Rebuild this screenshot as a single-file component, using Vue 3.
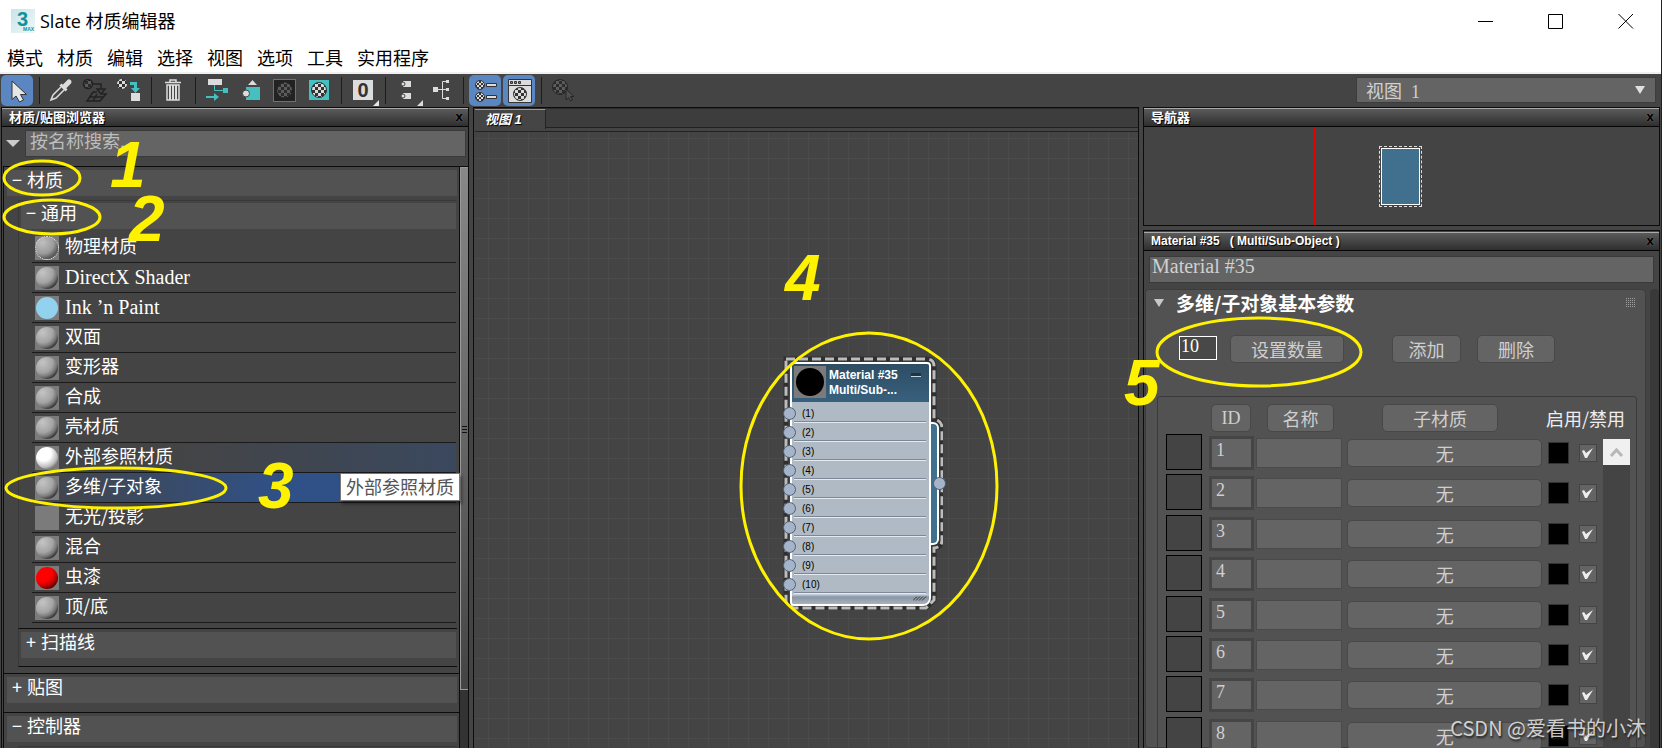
<script setup>
import { ref } from 'vue'

const menus = ['模式', '材质', '编辑', '选择', '视图', '选项', '工具', '实用程序']

const materials = [
  { name: '物理材质', kind: 'rim' },
  { name: 'DirectX Shader', kind: 'grey', latin: true },
  { name: 'Ink ’n Paint', kind: 'flat', latin: true },
  { name: '双面', kind: 'grey' },
  { name: '变形器', kind: 'grey' },
  { name: '合成', kind: 'grey' },
  { name: '壳材质', kind: 'grey' },
  { name: '外部参照材质', kind: 'white', state: 'hover' },
  { name: '多维/子对象', kind: 'grey', state: 'selected', tip: '外部参照材质' },
  { name: '无光/投影', kind: 'none' },
  { name: '混合', kind: 'grey' },
  { name: '虫漆', kind: 'red' },
  { name: '顶/底', kind: 'grey' }
]

const slots = [1, 2, 3, 4, 5, 6, 7, 8, 9, 10]
const rows = ref([1, 2, 3, 4, 5, 6, 7, 8].map((id) => ({ id, name: '', on: true })))
const count = ref('10')
const materialName = ref('Material #35')
</script>

<template>
  <div class="window">
    <svg class="defs" width="0" height="0" aria-hidden="true">
      <defs>
        <pattern id="chk-light" width="4" height="4" patternUnits="userSpaceOnUse">
          <rect width="4" height="4" fill="#e0e0e0" />
          <rect width="2" height="2" fill="#333" /><rect x="2" y="2" width="2" height="2" fill="#333" />
        </pattern>
        <pattern id="chk-big" width="6" height="6" patternUnits="userSpaceOnUse">
          <rect width="6" height="6" fill="#dcdcdc" />
          <rect width="3" height="3" fill="#333" /><rect x="3" y="3" width="3" height="3" fill="#333" />
        </pattern>
        <pattern id="chk-dark" width="6" height="6" patternUnits="userSpaceOnUse">
          <rect width="6" height="6" fill="#5c5c5c" />
          <rect width="3" height="3" fill="#2c2c2c" /><rect x="3" y="3" width="3" height="3" fill="#2c2c2c" />
        </pattern>
      </defs>
    </svg>

    <header class="titlebar">
      <svg class="logo" viewBox="0 0 24 24" aria-hidden="true">
        <defs>
          <linearGradient id="logo-bg" x1="0" y1="0" x2="1" y2="1">
            <stop offset="0" stop-color="#c9e4e8" /><stop offset="1" stop-color="#eef8f8" />
          </linearGradient>
        </defs>
        <rect width="24" height="24" fill="url(#logo-bg)" />
        <text x="6" y="17" class="logo-three">3</text>
        <text x="12" y="22" class="logo-max">MAX</text>
      </svg>
      <h1>Slate 材质编辑器</h1>
      <div class="win-buttons">
        <button type="button" aria-label="最小化"><svg viewBox="0 0 16 16"><path d="M0 8.5H15" /></svg></button>
        <button type="button" aria-label="最大化"><svg viewBox="0 0 16 16"><path d="M.5 1.500H14.500V15.500H.5Z" /></svg></button>
        <button type="button" aria-label="关闭"><svg viewBox="0 0 16 16"><path d="M.5 1L15 15.500M15 1L.5 15.500" /></svg></button>
      </div>
    </header>

    <nav class="menubar">
      <button v-for="m in menus" :key="m" type="button">{{ m }}</button>
    </nav>

    <div class="toolbar">
      <button type="button" class="tool active" aria-label="选择工具">
        <svg viewBox="0 0 32 32"><path fill="#e6e6e6" stroke="#333" d="M11 6V24.500L15 21L18.500 27L22.500 25L19.500 19.500H25.500Z" /></svg>
      </button>
      <i class="sep"></i>
      <button type="button" class="tool" aria-label="从对象拾取材质">
        <svg viewBox="0 0 32 32" fill="none" stroke="#dcdcdc">
          <path stroke-width="5" stroke-linecap="round" d="M20 11L24 7" /><path stroke-width="3" d="M15.500 9.500L21.500 15.500" />
          <path stroke-width="1.500" d="M16 12L8 20L6 25L11 23L19 15" />
        </svg>
      </button>
      <button type="button" class="tool" aria-label="将材质放入场景">
        <svg viewBox="0 0 32 32" fill="none" stroke="#222">
          <circle cx="9" cy="9" r="4.500" fill="url(#chk-dark)" stroke-width="1.500" />
          <path stroke-width="1.500" d="M14 9H22V14M18 14H26L22 19Z" />
          <path stroke-width="1.500" d="M14 17L8 26H21L27 19H23M14 17H18M11 22H24M18 19L14 26" />
        </svg>
      </button>
      <button type="button" class="tool" aria-label="将材质指定给选定对象">
        <svg viewBox="0 0 32 32">
          <circle cx="9" cy="9" r="5" fill="url(#chk-big)" />
          <path fill="#45bfc0" d="M17 7H24V13H27L22.500 18L18 13H21V10H17Z" /><rect x="18" y="18" width="9" height="8" fill="#dcdcdc" />
        </svg>
      </button>
      <i class="sep"></i>
      <button type="button" class="tool" aria-label="删除选定对象">
        <svg viewBox="0 0 32 32" fill="none" stroke="#dcdcdc">
          <path stroke-width="1.500" d="M8 7.500H24M13 7V5H19V7" />
          <path stroke-width="1.500" d="M10 10H22V25H10Z" /><path stroke-width="2" d="M13 10V25M16 10V25M19 10V25" />
        </svg>
      </button>
      <i class="sep"></i>
      <button type="button" class="tool" aria-label="移动子对象">
        <svg viewBox="0 0 32 32">
          <rect x="7" y="4" width="14" height="6" fill="#dcdcdc" />
          <path fill="none" stroke="#45bfc0" d="M13.500 10V15.500H22" /><rect x="22" y="13" width="5" height="5" fill="#45bfc0" />
          <path fill="#45bfc0" d="M5 21H13V18L18 22L13 26V23H5Z" />
        </svg>
      </button>
      <button type="button" class="tool" aria-label="隐藏未使用的示例窗">
        <svg viewBox="0 0 32 32">
          <rect x="11" y="12" width="14" height="13" fill="#45bfc0" /><path fill="#dcdcdc" d="M13 10L17.500 5L22 10Z" />
          <circle cx="11" cy="18.500" r="3.500" fill="#dcdcdc" stroke="#444" />
        </svg>
      </button>
      <button type="button" class="tool" aria-label="在视口中显示背景">
        <svg viewBox="0 0 32 32"><rect x="4.500" y="4.500" width="22" height="22" fill="#222" stroke="#707070" /><circle cx="15.500" cy="15" r="7.500" fill="url(#chk-dark)" /></svg>
      </button>
      <button type="button" class="tool" aria-label="在视口中显示明暗处理材质">
        <svg viewBox="0 0 32 32"><rect x="6" y="5" width="20" height="20" fill="#45bfc0" /><circle cx="16" cy="15" r="7.500" fill="url(#chk-big)" stroke="#333" /></svg>
      </button>
      <i class="sep"></i>
      <button type="button" class="tool" aria-label="材质 ID 通道">
        <svg viewBox="0 0 32 32"><rect x="6" y="5" width="20" height="20" fill="#dcdcdc" /><text x="16" y="22" text-anchor="middle" class="zero">0</text><path fill="#e6e6e6" d="M32 25V31H26Z" /></svg>
      </button>
      <i class="sep"></i>
      <button type="button" class="tool" aria-label="布局全部">
        <svg viewBox="0 0 32 32" fill="#dcdcdc"><path d="M12 6H20V12H12ZM12 18H20V24H12Z" /><circle cx="12" cy="9" r="2" stroke="#444" /><circle cx="12" cy="21" r="2" stroke="#444" /><path d="M32 25V31H26Z" /></svg>
      </button>
      <button type="button" class="tool" aria-label="布局子对象">
        <svg viewBox="0 0 32 32"><path fill="#dcdcdc" d="M8 12H13V17H8ZM21 5H24V8H21ZM21 13H24V16H21ZM21 22H24V25H21Z" /><path fill="none" stroke="#dcdcdc" d="M13 14.500H21M21 6.500H17.500V23.500H21" /></svg>
      </button>
      <i class="sep"></i>
      <button type="button" class="tool active" aria-label="材质/贴图浏览器">
        <svg viewBox="0 0 32 32" stroke="#333">
          <circle cx="11" cy="10" r="4.500" fill="url(#chk-light)" /><circle cx="11" cy="22" r="4.500" fill="url(#chk-light)" />
          <path fill="#dcdcdc" d="M17.500 8.500H27.500V11.500H17.500ZM17.500 20.500H27.500V23.500H17.500Z" />
        </svg>
      </button>
      <button type="button" class="tool active" aria-label="参数编辑器">
        <svg viewBox="0 0 32 32" stroke="#333">
          <path fill="#dcdcdc" d="M5.500 4.500H28.500V27.500H5.500ZM5.500 10.500H28.500" /><path fill="#5a89c4" d="M7.500 6.500H9.500V8.500H7.500ZM11.500 6.500H13.500V8.500H11.500ZM15.500 6.500H17.500V8.500H15.500Z" />
          <circle cx="17" cy="19" r="6.500" fill="url(#chk-big)" />
        </svg>
      </button>
      <i class="sep"></i>
      <button type="button" class="tool" aria-label="按材质选择">
        <svg viewBox="0 0 32 32" stroke="#262626"><circle cx="13" cy="12" r="7.500" fill="url(#chk-dark)" /><path fill="#505050" d="M19 14V25L21.500 22.500L23.500 26L25.500 25L23.500 21.500H27Z" /></svg>
      </button>
      <label class="view-select">
        <select aria-label="视图"><option>视图&nbsp; 1</option></select>
      </label>
    </div>

    <main class="workspace">
      <section class="browser">
        <div class="panel-title"><h2>材质/贴图浏览器</h2><button type="button" aria-label="关闭浏览器">x</button></div>
        <div class="search">
          <button type="button" class="arrow" aria-label="浏览器选项"></button>
          <input type="text" aria-label="搜索" placeholder="按名称搜索..." />
        </div>
        <div class="tree-wrap">
          <div class="tree">
            <section class="group open">
              <button type="button" class="bar"><b>−</b>材质</button>
              <div class="sub first">
                <button type="button" class="bar"><b>−</b>通用</button>
                <ul>
                  <li v-for="m in materials" :key="m.name" :class="m.state">
                    <span class="thumb" :class="m.kind"></span>
                    <span class="label" :class="{ latin: m.latin }">{{ m.name }}</span>
                    <span v-if="m.tip" class="tooltip" role="tooltip">{{ m.tip }}</span>
                  </li>
                </ul>
              </div>
              <div class="sub last"><button type="button" class="bar"><b>+</b>扫描线</button></div>
            </section>
            <section class="group"><button type="button" class="bar"><b>+</b>贴图</button></section>
            <section class="group"><button type="button" class="bar"><b>−</b>控制器</button><div class="sub first"></div></section>
          </div>
          <div class="scrollbar"><div class="thumb-bar"></div></div>
          <div class="grip"><i></i><i></i><i></i></div>
        </div>
      </section>

      <section class="view">
        <div class="tabs"><button type="button">视图 1</button></div>
        <div class="canvas">
          <article class="node">
            <svg class="outline" viewBox="0 0 160 254" aria-hidden="true">
              <path fill="none" stroke="#2f2f2f" stroke-width="5" d="M3 3H143Q151 3 151 10V63Q159 65 159 72V184Q159 191 151 192V244L143 252H10L3 246Z" />
              <path fill="none" stroke="#bcbcbc" stroke-width="3" stroke-dasharray="9 4" d="M3 3H143Q151 3 151 10V63Q159 65 159 72V184Q159 191 151 192V244L143 252H10L3 246Z" />
            </svg>
            <div class="out-tab"></div>
            <div class="node-box">
              <header><span class="preview"></span><p>Material #35<br />Multi/Sub-...</p><button type="button" aria-label="折叠"></button></header>
              <ol><li v-for="n in slots" :key="n"><i></i>({{ n }})</li></ol>
              <footer><svg viewBox="0 0 14 6"><path d="M0 5L4 1M3 5L7 1M6 5L10 1M9 5L13 1" /></svg></footer>
            </div>
            <i class="out-socket"></i>
          </article>
        </div>
      </section>

      <section class="side">
        <section class="panel">
          <div class="panel-title"><h2>导航器</h2><button type="button" aria-label="关闭导航器">x</button></div>
          <div class="navigator"><div class="viewport"><div class="mini"><i></i></div></div></div>
        </section>
        <section class="panel params">
          <div class="panel-title"><h2 class="arial">Material #35&nbsp;&nbsp; ( Multi/Sub-Object )</h2><button type="button" aria-label="关闭参数">x</button></div>
          <input v-model="materialName" class="mat-name" type="text" aria-label="材质名称" />
          <div class="scroll-area">
            <div class="rollout">
              <div class="roll-head"><i class="tri"></i><h3>多维/子对象基本参数</h3><i class="dots"></i></div>
              <div class="controls">
                <input v-model="count" type="text" aria-label="数量" />
                <button type="button" class="btn set">设置数量</button>
                <button type="button" class="btn add">添加</button>
                <button type="button" class="btn del">删除</button>
              </div>
              <div class="frame">
                <table>
                  <thead>
                    <tr>
                      <th class="h-id"><button type="button" class="btn roman">ID</button></th>
                      <th class="h-name"><button type="button" class="btn">名称</button></th>
                      <th class="h-sub"><button type="button" class="btn">子材质</button></th>
                      <th class="h-on">启用/禁用</th>
                    </tr>
                  </thead>
                  <tbody>
                    <tr v-for="r in rows" :key="r.id">
                      <td class="c-swatch"><span class="swatch"></span></td>
                      <td class="c-id"><input :value="r.id" type="text" :aria-label="'ID ' + r.id" /></td>
                      <td class="c-name"><input v-model="r.name" type="text" :aria-label="'名称 ' + r.id" /></td>
                      <td class="c-sub"><button type="button" class="btn">无</button></td>
                      <td class="c-color"><button type="button" :aria-label="'颜色 ' + r.id"></button></td>
                      <td class="c-on"><label><input v-model="r.on" type="checkbox" :aria-label="'启用 ' + r.id" /><svg viewBox="0 0 18 18"><path d="M3 7L5 6L7 9L14 4L8 14H6Z" /></svg></label></td>
                    </tr>
                  </tbody>
                </table>
                <div class="list-scroll"><button type="button" aria-label="向上滚动"><svg viewBox="0 0 27 26"><path d="M8 17L13.500 11L19 17" /></svg></button></div>
              </div>
            </div>
            <div class="track"></div>
          </div>
        </section>
      </section>
    </main>

    <svg class="marks" aria-hidden="true">
      <ellipse cx="42" cy="178" rx="38" ry="17" /><ellipse cx="52" cy="217" rx="48" ry="17" />
      <ellipse cx="116" cy="488" rx="110" ry="20" /><ellipse cx="869" cy="486" rx="128" ry="153" />
      <ellipse cx="1259" cy="352" rx="102" ry="34" />
      <text x="110" y="187">1</text><text x="129" y="241">2</text><text x="258" y="508">3</text>
      <text x="785" y="300">4</text><text x="1124" y="405">5</text>
    </svg>
    <p class="watermark">CSDN @爱看书的小沐</p>
  </div>
</template>

<style>
body { margin: 0; background: #444; }
</style>

<style scoped>
* { box-sizing: border-box; }
button, input, select { font: inherit; color: inherit; margin: 0; padding: 0; border: 0; background: none; border-radius: 0; outline: 0; }
h1, h2, h3, p, ul, ol { margin: 0; padding: 0; font-weight: normal; list-style: none; }
i, b { font-style: normal; font-weight: normal; }
.window { position: relative; height: 100vh; overflow: hidden; display: flex; flex-direction: column; background: #444; color: #eee; font: 18px/24px "Noto Sans CJK SC", sans-serif; border-right: 1px solid #222; }
.defs { position: absolute; }

.titlebar { flex: none; height: 42px; padding-left: 11px; display: flex; align-items: center; gap: 5px; background: #fff; color: #000; }
.logo { width: 24px; height: 24px; }
.logo-three { font: bold 20px "Liberation Sans", sans-serif; fill: #12919a; }
.logo-max { font: bold 5px "Liberation Sans", sans-serif; fill: #12919a; }
.titlebar h1 { flex: 1; font: 18px/24px "Open Sans", "Noto Sans CJK SC", sans-serif; }
.win-buttons { display: flex; }
.win-buttons button { width: 70px; height: 42px; display: grid; place-items: center; }
.win-buttons svg { width: 16px; height: 16px; fill: none; stroke: #000; }
.menubar { flex: none; height: 32px; padding: 3px 7px 0; display: flex; gap: 14px; align-items: flex-start; background: #fff; color: #000; border-bottom: 2px solid #f0f0f0; }

.toolbar { flex: none; height: 33px; padding: 1px 5px 0 1px; display: flex; gap: 2px; }
.tool { flex: none; width: 32px; height: 31px; border-radius: 5px; }
.tool svg { display: block; width: 32px; height: 32px; }
.tool.active { background: #5a87c2; }
.sep { flex: none; width: 8px; height: 27px; margin-top: 2px; background: linear-gradient(90deg, transparent 4px, #1c1c1c 4px, #1c1c1c 5px, transparent 5px); }
.zero { font: bold 20px "Liberation Sans", sans-serif; fill: #333; }
.view-select { position: relative; width: 300px; height: 26px; margin: 2px 0 0 auto; background: #646464; border: 1px solid #3c3c3c; color: #d0d0d0; }
.view-select select { appearance: none; width: 100%; height: 23px; padding-left: 9px; font: 18px/22px "Liberation Serif", "Noto Sans CJK SC", serif; }
.view-select::after { content: ""; position: absolute; right: 10px; top: 8px; border: 5px solid transparent; border-top: 8px solid #e0e0e0; border-bottom: 0; pointer-events: none; }

.workspace { flex: 1; min-height: 0; display: grid; grid-template-columns: 468px minmax(0, 1fr) 517px; column-gap: 4px; padding: 0 1px; }
.panel-title { flex: none; height: 19px; padding: 0 4px 0 7px; display: flex; justify-content: space-between; border-top: 1px solid #aaa; border-bottom: 1px solid #050505; background: linear-gradient(#5a5a5a, #2f2f2f); }
.panel-title h2 { font-size: 13px; line-height: 15px; font-weight: bold; color: #fff; text-shadow: 1px 1px 1px #000; }
.panel-title h2.arial { font: bold 12px/16px "Liberation Sans", sans-serif; }
.panel-title button { width: 10px; font: bold 12px/15px "DejaVu Sans", sans-serif; color: #000; text-shadow: 0 0 1px #999; }

.browser { min-height: 0; display: flex; flex-direction: column; border: 1px solid #0c0c0c; border-bottom: 0; }
.search { flex: none; height: 39px; display: flex; gap: 5px; padding: 3px 2px 0 4px; }
.arrow { width: 14px; height: 26px; display: grid; place-items: center; }
.arrow::before { content: ""; border: 7px solid transparent; border-top-color: #ccc; border-bottom: 0; }
.search input { flex: 1; min-width: 0; height: 27px; padding: 0 4px 8px; background: #646464; border: 1px solid #3a3a3a; line-height: 20px; }
.search input::placeholder { color: #bdbdbd; opacity: 1; }
.tree-wrap { position: relative; flex: 1; min-height: 0; display: flex; margin-left: 1px; border-top: 1px solid #0c0c0c; border-left: 1px solid #0c0c0c; }
.tree { flex: 1; min-width: 0; overflow: visible; }
.group { padding: 3px 2px 9px 3px; border-bottom: 1px solid #0c0c0c; }
.group.open { padding-bottom: 6px; }
.group:last-child { border-bottom: 0; }
.bar { display: block; width: 100%; height: 26px; padding: 0 0 7px 5px; background: #525252; text-align: left; line-height: 19px; color: #fff; }
.bar b { display: inline-block; width: 15px; }
.sub { margin: 4px 0 0 11px; padding: 2px 1px 5px 2px; border: 1px solid #393939; border-width: 1px 0 0 1px; }
.sub.last { margin-top: 0; padding: 3px 1px 8px 2px; border-top-color: #0c0c0c; border-bottom: 1px solid #0c0c0c; }
.sub ul { margin: 4px 0 0 11px; }
.sub li { position: relative; height: 30px; display: flex; gap: 6px; padding: 3px 0 0 3px; border-bottom: 1px solid #1a1a1a; }
.sub li.hover { background: linear-gradient(90deg, #444 30%, #3a485e); }
.sub li.selected { background: linear-gradient(90deg, #444, #2f5188 60%); }
.label { line-height: 18px; color: #fff; }
.label.latin { font: 20px/22px "Liberation Serif", serif; }
.thumb { width: 24px; height: 24px; background: #7b7b7b; display: grid; place-items: center; }
.thumb::before { content: ""; width: 22px; height: 22px; border-radius: 50%; background: radial-gradient(circle at 30% 25%, #c4c4c4, #a4a4a4 45%, #7a7a7a 62%, #343434 78%, #6a6a6a 94%); }
.thumb.rim::before { background: radial-gradient(circle at 30% 25%, #c0c0c0, #9a9a9a 50%, #555 75%, #999 95%); border: 1px dotted #eee; }
.thumb.white::before { background: radial-gradient(circle at 35% 30%, #fff 35%, #bbb 65%, #444 90%); }
.thumb.flat::before { background: #93d2ee; }
.thumb.red::before { background: radial-gradient(circle at 30% 25%, #f00 40%, #c00 58%, #400 82%); }
.thumb.none::before { display: none; }
.tooltip { position: absolute; z-index: 2; right: -4px; top: 0; height: 28px; padding: 0 5px; line-height: 25px; background: #fff; border: 1px solid #777; color: #555; box-shadow: 2px 3px 3px rgba(0, 0, 0, .4); }
.scrollbar { width: 9px; background: #333; border-left: 1px solid #0c0c0c; }
.thumb-bar { height: 523px; border: 1px solid #999; border-right: 0; background: linear-gradient(#888, #666 50%, #444); }
.grip { position: absolute; right: 1px; top: 259px; display: grid; gap: 2px; }
.grip i { width: 5px; height: 1px; background: #111; }

.view { min-width: 0; min-height: 0; display: flex; flex-direction: column; border: 1px solid #0c0c0c; border-bottom: 0; }
.tabs { flex: none; height: 20px; margin-left: 1px; background: #3d3d3d; border-bottom: 1px solid #222; border-top: 1px solid #2c2c2c; display: flex; }
.tabs button { width: 71px; height: 20px; padding-left: 10px; text-align: left; background: #454545; border-top: 1px solid #999; border-right: 1px solid #222; font: italic bold 13px/14px "Liberation Sans", "Noto Sans CJK SC", sans-serif; color: #fff; text-shadow: 1px 1px 1px #000; }
.canvas { flex: 1; position: relative; margin: 3px 0 0 1px; border-top: 1px solid #222; background-color: #444; background-image: linear-gradient(90deg, #4b4b4b 1px, transparent 1px), linear-gradient(#4b4b4b 1px, transparent 1px); background-size: 20px 20px; background-position: 13px 6px; }

/* node position on the free canvas */
.node { position: absolute; left: 308px; top: 224px; width: 160px; height: 254px; color: #000; }
.outline { position: absolute; inset: 0; width: 160px; height: 254px; }
.node-box { position: absolute; left: 7px; top: 6px; width: 141px; border: 2px solid #fff; border-radius: 4px 4px 8px 4px; background: #b0bac4; }
.node-box header { height: 38px; padding: 2px; display: flex; gap: 3px; background: linear-gradient(#2d4d63, #38607e); border-radius: 2px 2px 0 0; }
.preview { flex: none; width: 32px; height: 32px; background: #7b7b7b; display: grid; place-items: center; }
.preview::before { content: ""; width: 28px; height: 28px; border-radius: 50%; background: #000; }
.node-box p { flex: 1; white-space: nowrap; font: bold 12px/15px "Liberation Sans", sans-serif; color: #fff; padding-top: 2px; }
.node-box header button { position: absolute; right: 8px; top: 9px; width: 10px; height: 4px; background: #1d3444; border-bottom: 1px solid #c6d4de; }
.node-box ol { padding: 2px 3px 0 2px; }
.node-box li { position: relative; height: 19px; padding-left: 8px; font: 10px/19px "Liberation Sans", sans-serif; border-bottom: 1px solid #e4eaf0; box-shadow: inset 0 -1px #7c8898; }
.node-box li i { position: absolute; left: -11px; top: 3px; }
.node-box li i, .out-socket { width: 13px; height: 13px; border-radius: 50%; background: #a5b4c8; border: 1px solid #4e6078; }
.node-box footer { height: 10px; padding-right: 2px; display: flex; justify-content: flex-end; background: linear-gradient(#d0d8e0, #8a96a4 30%, #a8b2bc); border-radius: 0 0 6px 2px; }
.node-box footer svg { width: 14px; height: 7px; margin-top: 1px; fill: none; stroke: #333; }
.out-tab { position: absolute; left: 146px; top: 66px; width: 10px; height: 123px; background: #41708f; border: 2px solid #fff; border-left: 0; border-radius: 0 6px 6px 0; }
.out-socket { position: absolute; left: 150px; top: 121px; }

.side { min-width: 0; min-height: 0; display: flex; flex-direction: column; gap: 4px; }
.panel { border: 1px solid #0c0c0c; }
.navigator { height: 98px; display: flex; justify-content: center; }
.viewport { width: 146px; margin-right: 29px; border: 1px solid #e00000; border-width: 0 1px; display: grid; place-items: center; }
.mini { width: 43px; height: 61px; padding: 1px; border: 1px dashed #ddd; display: flex; margin-left: 27px; }
.mini i { flex: 1; border: 1px solid #fff; background: #41708f; }
.params { flex: 1; min-height: 0; overflow: hidden; display: flex; flex-direction: column; border-bottom: 0; padding-top: 1px; }
.mat-name { flex: none; height: 27px; margin: 5px 5px 0 5px; padding: 0 2px 7px; background: #646464; border: 1px solid #3a3a3a; color: #d0d0d0; font: 20px/18px "Liberation Serif", serif; }
.scroll-area { flex: 1; min-height: 0; margin-top: 6px; display: flex; gap: 4px; padding: 0 0 0 1px; }
.rollout { flex: 1; min-width: 0; background: #525252; border: 1px solid #3c3c3c; border-radius: 4px; }
.track { width: 9px; background: #393939; border-radius: 4px 4px 0 0; }
.roll-head { height: 26px; padding: 0 9px 0 8px; display: flex; align-items: center; }
.roll-head h3 { flex: 1; padding-left: 12px; font-size: 19px; font-weight: bold; line-height: 26px; color: #fff; }
.tri { border: 5px solid transparent; border-top: 8px solid #c8c8c8; border-bottom: 0; }
.dots { width: 10px; height: 10px; background: linear-gradient(90deg, transparent 1px, #525252 1px) 0 0 / 2px 2px, linear-gradient(#a0a0a0 1px, #525252 1px) 0 0 / 2px 2px; }
.controls { height: 80px; padding: 19px 0 0 33px; display: flex; align-items: flex-start; }
.controls input { width: 38px; height: 24px; margin: 1px 13px 0 0; padding: 0 1px 3px; border: 1px solid #fff; background: #484848; color: #fff; font: 18px/18px "Liberation Serif", serif; }
.btn { height: 28px; border: 1px solid #484848; border-radius: 5px; background: #646464; color: #cfcfcf; font-size: 18px; line-height: 24px; }
.btn.roman { font-family: "Liberation Serif", serif; }
.set { width: 114px; }
.add { width: 69px; margin-left: 48px; }
.del { width: 78px; margin-left: 16px; }
.frame { display: grid; margin: 0 8px 0 11px; border: 1px solid #3a3a3a; border-radius: 3px; }
table { grid-area: 1 / 1; display: block; padding: 7px 0 0 8px; }
thead, tbody { display: block; }
th, td { padding: 0; font-weight: normal; }
thead tr { display: flex; height: 28px; padding-right: 11px; }
thead .btn { width: 100%; display: block; }
.h-id { width: 40px; margin-left: 45px; }
.h-name { width: 67px; margin-left: 16px; }
.h-sub { width: 116px; margin-left: 48px; }
.h-on { margin-left: auto; line-height: 29px; color: #eee; }
tbody { display: grid; grid-template-rows: repeat(8, 1fr); height: 323px; margin-top: 2px; padding-right: 39px; }
tbody tr { height: 38px; display: grid; grid-template-columns: 43px 47px minmax(0, 91fr) minmax(0, 200fr) 31px 18px; align-items: center; }
td { display: flex; }
.c-swatch { align-self: start; }
.swatch { width: 36px; height: 36px; background: #444; border: 1px solid #000; }
.c-id { padding-right: 2px; }
.c-id input { width: 100%; height: 34px; padding: 0 4px 5px; border: 3px solid #454545; background: #646464; color: #d0d0d0; font: 18px/20px "Liberation Serif", serif; }
.c-name { padding-right: 5px; }
.c-name input { width: 100%; height: 30px; background: #646464; border: 1px solid #4a4a4a; }
.c-sub { padding-right: 6px; }
.c-sub .btn { width: 100%; }
.c-color button { width: 21px; height: 22px; background: #000; border: 1px solid #333; }
.c-on label { display: grid; width: 18px; height: 18px; }
.c-on input { grid-area: 1 / 1; appearance: none; width: 18px; height: 18px; background: #646464; border: 1px solid #444; }
.c-on svg { grid-area: 1 / 1; visibility: hidden; fill: #eee; pointer-events: none; z-index: 1; }
.c-on input:checked + svg { visibility: visible; }
.list-scroll { grid-area: 1 / 1; justify-self: end; width: 27px; margin: 42px 6px 0 0; background: #444; }
.list-scroll button { display: block; width: 27px; height: 26px; background: #f0f0f0; }
.list-scroll svg { display: block; fill: none; stroke: #b8b8b8; stroke-width: 3; }

.marks { position: absolute; inset: 0; width: 100%; height: 100%; z-index: 5; pointer-events: none; }
.marks ellipse { fill: none; stroke: #fff200; stroke-width: 3; }
.marks text { fill: #fff200; font: italic bold 64px "Liberation Sans", sans-serif; }
.watermark { position: absolute; z-index: 6; right: 15px; bottom: 6px; font-size: 20px; line-height: 28px; color: rgba(235, 235, 235, .85); text-shadow: 1px 2px 2px #222; }
</style>
